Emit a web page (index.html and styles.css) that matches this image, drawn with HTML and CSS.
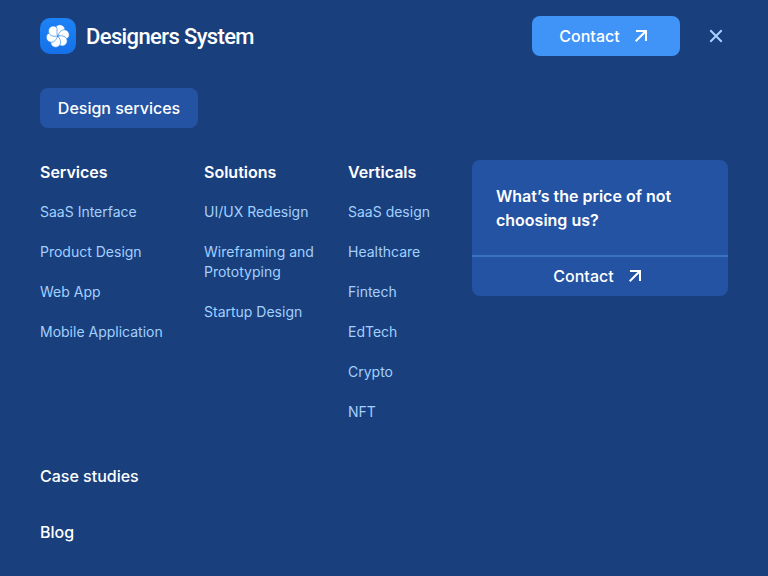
FILE: index.html
```html
<!DOCTYPE html>
<html lang="en">
<head>
<meta charset="utf-8">
<title>Designers System</title>
<link rel="stylesheet" href="styles.css">
</head>
<body>
<header class="header">
  <a class="brand">
    <svg class="logo" viewBox="0 0 36 36">
      <defs>
        <linearGradient id="tile" x1="0" y1="0" x2="0" y2="1"><stop offset="0" stop-color="#1c83f5"/><stop offset="1" stop-color="#1671e8"/></linearGradient>
        <path id="petal" d="M0 0C-2.8-2.2-5-5.2-3.9-8.3C-2.8-11.6 1.5-12.6 4.1-10.3C6.2-8.3 5.8-5.9 4.2-4.6C2.4-3.3.8-2.4 0 0Z"/>
      </defs>
      <rect width="36" height="36" rx="10" fill="url(#tile)"/>
      <g class="petals" transform="translate(17.8 18) rotate(12)">
        <use href="#petal"/>
        <use href="#petal" transform="rotate(60)"/>
        <use href="#petal" transform="rotate(120)"/>
        <use href="#petal" transform="rotate(180)"/>
        <use href="#petal" transform="rotate(240)"/>
        <use href="#petal" transform="rotate(300)"/>
      </g>
    </svg>
    <span class="brand-name">Designers System</span>
  </a>
  <div class="actions">
    <a class="button"><span>Contact</span><svg class="arrow" viewBox="0 0 14 14"><path d="M2 2H12V12M12 2L1.7 12.3"/></svg></a>
    <svg class="close" viewBox="0 0 14 14"><path d="M1.3 1.3L12.7 12.7M12.7 1.3L1.3 12.7"/></svg>
  </div>
</header>
<nav>
  <a class="tab">Design services</a>
  <div class="menu">
    <section class="column">
      <h2>Services</h2>
      <a>SaaS Interface</a><a>Product Design</a><a>Web App</a><a>Mobile Application</a>
    </section>
    <section class="column">
      <h2>Solutions</h2>
      <a>UI/UX Redesign</a><a>Wireframing and<br>Prototyping</a><a>Startup Design</a>
    </section>
    <section class="column">
      <h2>Verticals</h2>
      <a>SaaS design</a><a>Healthcare</a><a>Fintech</a><a>EdTech</a><a>Crypto</a><a>NFT</a>
    </section>
    <aside class="card">
      <p>What’s the price of not choosing us?</p>
      <a class="card-link"><span>Contact</span><svg class="arrow" viewBox="0 0 14 14"><path d="M2 2H12V12M12 2L1.7 12.3"/></svg></a>
    </aside>
  </div>
  <div class="pages"><a>Case studies</a><a>Blog</a></div>
</nav>
</body>
</html>
```
FILE: styles.css
```css
* { box-sizing: border-box; }
body {
  margin: 0;
  height: 576px;
  padding: 16px 40px 0;
  background: #193f7d;
  color: #fff;
  font: 500 16px/24px Inter, sans-serif;
  overflow: hidden;
}
svg { display: block; flex: none; fill: none; }
.header { display: flex; justify-content: space-between; height: 40px; }
.brand { display: flex; align-items: center; gap: 10px; }
.logo { width: 36px; height: 36px; }
.petals { fill: #fff; stroke: #1a7bef; stroke-width: 0.6; }
.brand-name { padding-top: 2px; font: 500 22px/28px Roboto, sans-serif; letter-spacing: -0.62px; }
.actions { display: flex; align-items: center; gap: 29px; padding-right: 5px; }
.button {
  display: flex;
  align-items: center;
  justify-content: center;
  gap: 14px;
  width: 148px;
  height: 40px;
  padding-right: 5px;
  border-radius: 8px;
  background: #4094f8;
}
.arrow { width: 14px; height: 14px; stroke: #fff; stroke-width: 2; }
.close { width: 14px; height: 14px; stroke: #a8d2ff; stroke-width: 2; }
.tab {
  display: flex;
  align-items: center;
  justify-content: center;
  width: 158px;
  height: 40px;
  margin-top: 32px;
  border-radius: 8px;
  background: #2353a2;
}
.menu {
  display: grid;
  grid-template-columns: 164px 144px 124px 256px;
  align-items: start;
  margin-top: 32px;
  height: 264px;
}
.column { display: flex; flex-direction: column; gap: 20px; }
.column h2 { margin: 0 0 -2px; font-size: 16px; line-height: 24px; font-weight: 600; }
.column a { color: #a2d0ff; font-size: 14px; line-height: 20px; font-weight: 400; }
.card { height: 136px; border-radius: 8px; background: #2353a2; overflow: hidden; }
.card p { height: 95px; margin: 0; padding: 24px 40px 0 24px; font-weight: 600; }
.card-link {
  display: flex;
  align-items: center;
  justify-content: center;
  gap: 14px;
  height: 41px;
  padding: 0 5px 2px 0;
  border-top: 2px solid #3872c3;
}
.pages { display: flex; flex-direction: column; gap: 32px; margin-top: 40px; }
```
